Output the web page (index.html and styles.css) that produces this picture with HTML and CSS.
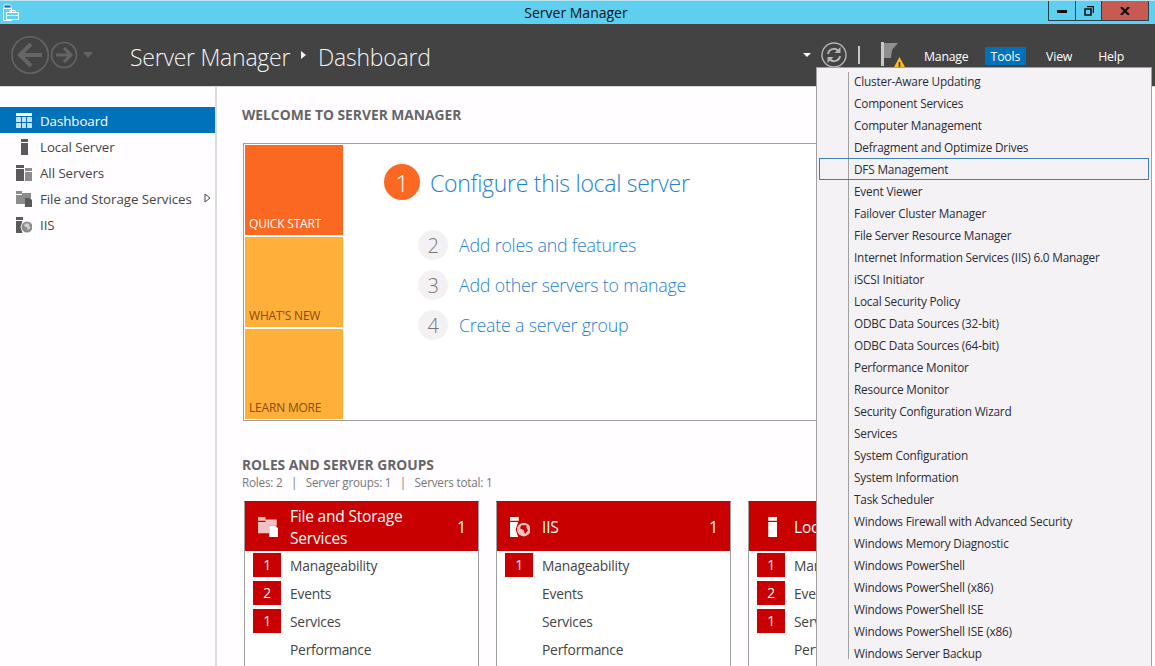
FILE: index.html
```html
<!DOCTYPE html>
<html lang="en">
<head>
  <meta charset="UTF-8">
  <title>Server Manager</title>
  <link rel="stylesheet" href="styles.css">
</head>
<body>
  <svg class="defs" width="0" height="0">
    <symbol id="i-server" viewBox="0 0 16 16">
      <path d="M5 0h7v3H5zM5 4h7v12H5z"/>
    </symbol>
    <symbol id="i-servers" viewBox="0 0 16 16">
      <path d="M0 0h8v3H0zM0 4h8v12H0z"/>
      <path class="dim" d="M9 3h7v3H9zM9 7h7v9H9z"/>
    </symbol>
    <symbol id="i-files" viewBox="0 0 16 16">
      <path class="dim" d="M0 0h6v3H0zM0 4h6V2h9v5H9v6H0z"/>
      <path d="M9 7h5l2 2v7H9z"/>
    </symbol>
    <symbol id="i-iis" viewBox="0 0 16 16">
      <path d="M0 0h7v3H0zM0 4h6.500L4.500 10l2 6H0z"/>
      <circle class="dim" cx="11" cy="10" r="5.500"/>
      <path class="cut" d="M9 6.500h4l.5 3 1 1-2.500 3-1-3-3-1.500z"/>
    </symbol>
  </svg>

  <header class="titlebar">
    <svg class="app-icon" width="18" height="17" viewBox="0 0 18 17">
      <path d="M2.500 4.500h8v12h-8z" fill="#5ed0f0" stroke="#fff"/>
      <path d="M3 1h7v3H3z" fill="#0072bc" stroke="#fff" stroke-width=".8"/>
      <path d="M5.500 8.500h12v7h-12z" fill="#5ed0f0" stroke="#fff"/>
      <path d="M9 8V6.500h5V8M6 11.500h11" fill="none" stroke="#fff"/>
    </svg>
    <span class="window-title">Server Manager</span>
    <div class="window-controls">
      <div class="win-btn min"><span class="min-glyph"></span></div>
      <div class="win-btn">
        <svg width="10" height="10" viewBox="0 0 10 10"><path d="M3 .500h6.500V7M1 3h6v6H1z" fill="none" stroke="#111" stroke-width="1.600"/></svg>
      </div>
      <div class="win-btn close">
        <svg width="10" height="8" viewBox="0 0 10 8"><path d="M1 0l8 8M9 0L1 8" fill="none" stroke="#111" stroke-width="2.200"/></svg>
      </div>
    </div>
  </header>

  <div class="toolbar">
    <svg class="nav-icons" width="84" height="40" viewBox="0 0 84 40">
      <g fill="none" stroke="#656565">
        <circle cx="19" cy="20" r="18.200" stroke-width="1.600"/>
        <circle cx="53" cy="20" r="12.500" stroke-width="1.600"/>
        <path d="M31 20H10M20 9L9 20l11 11" stroke-width="4"/>
        <path d="M45 20h16M53 13l7 7-7 7" stroke-width="3"/>
      </g>
      <path d="M72 17h10l-5 6z" fill="#656565"/>
    </svg>
    <div class="crumbs">
      <span>Server Manager</span>
      <i class="crumb-arrow"></i>
      <span>Dashboard</span>
    </div>
    <div class="tool-right">
      <i class="caret"></i>
      <svg class="refresh" width="26" height="26" viewBox="0 0 26 26">
        <circle cx="13" cy="13" r="12" fill="none" stroke="#b5b5b5" stroke-width="1.400"/>
        <path d="M7 12a6 6 0 0 1 10.500-3M19 14a6 6 0 0 1-10.500 3" fill="none" stroke="#b5b5b5" stroke-width="2"/>
        <path d="M19.500 5v6h-6zM6.500 21v-6h6z" fill="#b5b5b5"/>
      </svg>
      <i class="tool-sep"></i>
      <svg class="flag" width="27" height="27" viewBox="0 0 27 27">
        <path d="M0 0h3v24H0z" fill="#c8c8c8"/>
        <path d="M3 1h14l-6 7-1 8H3z" fill="#8f8f8f"/>
        <path d="M12 27l6.500-12L25 27z" fill="#fdc010"/>
        <path d="M17.700 20h1.600v7h-1.600z" fill="#333"/>
      </svg>
      <nav class="top-menu">
        <span class="manage">Manage</span>
        <span class="active">Tools</span>
        <span>View</span>
        <span>Help</span>
      </nav>
    </div>
  </div>

  <div class="layout">
    <aside class="sidebar">
      <a class="side-item selected">
        <svg width="16" height="16" viewBox="0 0 16 16" class="side-icon"><path fill="#fff" d="M0 0h16v3H0z"/><path fill="#c4e0f4" d="M0 4h5v5H0zM6 4h4v5H6zM11 4h5v5h-5zM0 10h5v5H0zM6 10h4v5H6zM11 10h5v5h-5z"/></svg>
        Dashboard
      </a>
      <a class="side-item"><svg class="side-icon" width="16" height="16"><use href="#i-server"/></svg>Local Server</a>
      <a class="side-item"><svg class="side-icon" width="16" height="16"><use href="#i-servers"/></svg>All Servers</a>
      <a class="side-item"><svg class="side-icon" width="16" height="16"><use href="#i-files"/></svg>File and Storage Services<svg class="expander" width="7" height="10" viewBox="0 0 7 10"><path d="M1 1l5 4-5 4z" fill="#fff" stroke="#444"/></svg></a>
      <a class="side-item"><svg class="side-icon" width="16" height="16"><use href="#i-iis"/></svg>IIS</a>
    </aside>

    <main class="content">
      <h2 class="section-title">WELCOME TO SERVER MANAGER</h2>
      <section class="welcome">
        <div class="tiles">
          <div class="tile quick">QUICK START</div>
          <div class="tile">WHAT'S NEW</div>
          <div class="tile">LEARN MORE</div>
        </div>
        <div class="steps">
          <div class="step-main"><span class="num big">1</span><a>Configure this local server</a></div>
          <div class="step"><span class="num">2</span><a>Add roles and features</a></div>
          <div class="step"><span class="num">3</span><a>Add other servers to manage</a></div>
          <div class="step"><span class="num">4</span><a>Create a server group</a></div>
        </div>
      </section>

      <h2 class="section-title roles-title">ROLES AND SERVER GROUPS</h2>
      <p class="roles-sub">Roles: 2 &nbsp;&nbsp;|&nbsp;&nbsp; Server groups: 1 &nbsp;&nbsp;|&nbsp;&nbsp; Servers total: 1</p>

      <div class="cards">
        <article class="card">
          <div class="card-head">
            <svg class="card-icon" width="20" height="20"><use href="#i-files"/></svg>
            <h3>File and Storage<br>Services</h3>
            <span class="count">1</span>
          </div>
          <div class="row"><b>1</b>Manageability</div>
          <div class="row"><b>2</b>Events</div>
          <div class="row"><b>1</b>Services</div>
          <div class="row"><b class="none"></b>Performance</div>
        </article>
        <article class="card">
          <div class="card-head">
            <svg class="card-icon" width="20" height="20"><use href="#i-iis"/></svg>
            <h3>IIS</h3>
            <span class="count">1</span>
          </div>
          <div class="row"><b>1</b>Manageability</div>
          <div class="row"><b class="none"></b>Events</div>
          <div class="row"><b class="none"></b>Services</div>
          <div class="row"><b class="none"></b>Performance</div>
        </article>
        <article class="card">
          <div class="card-head">
            <svg class="card-icon" width="20" height="20"><use href="#i-server"/></svg>
            <h3>Local Server</h3>
            <span class="count">1</span>
          </div>
          <div class="row"><b>1</b>Manageability</div>
          <div class="row"><b>2</b>Events</div>
          <div class="row"><b>1</b>Services</div>
          <div class="row"><b class="none"></b>Performance</div>
        </article>
      </div>
    </main>
  </div>

  <ul class="tools-menu">
    <li>Cluster-Aware Updating</li>
    <li>Component Services</li>
    <li>Computer Management</li>
    <li>Defragment and Optimize Drives</li>
    <li class="hover">DFS Management</li>
    <li>Event Viewer</li>
    <li>Failover Cluster Manager</li>
    <li>File Server Resource Manager</li>
    <li>Internet Information Services (IIS) 6.0 Manager</li>
    <li>iSCSI Initiator</li>
    <li>Local Security Policy</li>
    <li>ODBC Data Sources (32-bit)</li>
    <li>ODBC Data Sources (64-bit)</li>
    <li>Performance Monitor</li>
    <li>Resource Monitor</li>
    <li>Security Configuration Wizard</li>
    <li>Services</li>
    <li>System Configuration</li>
    <li>System Information</li>
    <li>Task Scheduler</li>
    <li>Windows Firewall with Advanced Security</li>
    <li>Windows Memory Diagnostic</li>
    <li>Windows PowerShell</li>
    <li>Windows PowerShell (x86)</li>
    <li>Windows PowerShell ISE</li>
    <li>Windows PowerShell ISE (x86)</li>
    <li>Windows Server Backup</li>
  </ul>
</body>
</html>
```

FILE: styles.css
```css
* {
  box-sizing: border-box;
}

html,
body {
  height: 100%;
}

body {
  margin: 0;
  overflow: hidden;
  position: relative;
  font-family: "Open Sans", "Noto Sans", sans-serif;
  font-size: 12.500px;
  letter-spacing: -0.2px;
  color: #333;
  background-color: #fffdff;
}

.defs {
  display: none;
}

/* icon symbols pick these up through <use> */
.dim {
  fill: var(--dim, #8c8c8c);
}

.cut {
  fill: var(--cut, #d0d0d0);
}

/* window chrome */
.titlebar {
  height: 24px;
  padding-right: 3px;
  background-color: #5fcfef;
  border-top: 1px solid #b9e6f2;
  position: relative;
  text-align: center;
}

.app-icon {
  position: absolute;
  left: 1px;
  top: 3px;
}

.window-title {
  font-size: 14px;
  line-height: 23px;
  letter-spacing: 0;
  color: #111;
}

.window-controls {
  position: absolute;
  top: 0;
  right: 6px;
  display: flex;
  height: 20px;
  border: 1px solid #28404c;
  border-top: 0;
}

.win-btn {
  width: 26px;
  display: flex;
  align-items: center;
  justify-content: center;
  border-right: 1px solid #28404c;
}

.win-btn.min {
  width: 27px;
}

.win-btn.close {
  width: 46px;
  border-right: 0;
  background-color: #c75a52;
}

.min-glyph {
  display: block;
  width: 10px;
  height: 3px;
  margin-top: 2px;
  background-color: #111;
}

.toolbar {
  height: 63px;
  background-color: #434343;
  border-bottom: 1px solid #d8d8d8;
  display: flex;
  align-items: center;
  padding: 0 25px 0 11px;
  color: #fff;
}

.crumbs {
  display: flex;
  align-items: center;
  margin: 3px 0 0 35px;
  font-size: 23px;
  font-weight: 300;
  letter-spacing: -0.25px;
  color: #f4f4f4;
}

.crumb-arrow {
  width: 0;
  height: 0;
  margin: 0 12px 4px 11px;
  border-left: 5px solid #f4f4f4;
  border-top: 4px solid transparent;
  border-bottom: 4px solid transparent;
}

.tool-right {
  margin-left: auto;
  display: flex;
  align-items: center;
}

.caret {
  width: 0;
  height: 0;
  margin-right: 10px;
  border-top: 4px solid #fff;
  border-left: 4px solid transparent;
  border-right: 4px solid transparent;
}

.tool-sep {
  width: 2px;
  height: 18px;
  margin: 0 21px 0 11px;
  background-color: #c8c8c8;
}

.flag {
  margin-top: 1px;
}

.top-menu {
  display: flex;
  align-items: center;
  gap: 14px;
  margin: 1px 0 0 10px;
}

.top-menu span {
  height: 18px;
  line-height: 19px;
  padding: 0 6px;
  font-size: 12.300px;
  color: #fff;
}

.top-menu .manage {
  padding-right: 2px;
}

.top-menu .active {
  background-color: #0072bc;
}

/* main area */
.layout {
  display: flex;
  height: 579px;
}

.sidebar {
  width: 217px;
  flex: none;
  padding-top: 20px;
  border-right: 2px solid #dcdcdc;
}

.side-item {
  display: flex;
  align-items: center;
  height: 26px;
  padding: 1px 0 0 16px;
  font-size: 13.300px;
  letter-spacing: -0.05px;
  color: #444;
  position: relative;
}

.side-icon {
  margin-right: 8px;
  fill: #5a5a5a;
}

.side-item.selected {
  background-color: #0072bc;
  color: #fff;
}

.expander {
  position: absolute;
  left: 204px;
  top: 8px;
}

.content {
  flex: 1;
  min-width: 0;
  padding: 19px 20px 0 25px;
}

.section-title {
  margin: 0;
  font-size: 13.800px;
  line-height: 18px;
  font-weight: 700;
  letter-spacing: 0;
  color: #666;
}

.welcome {
  display: flex;
  height: 278px;
  margin: 19px 0 0 1px;
  padding: 1px;
  border: 1px solid #a0a0a0;
  background-color: #fff;
}

.tiles {
  width: 98px;
  display: grid;
  grid-template-rows: repeat(3, 90px);
  row-gap: 2px;
}

.tile {
  display: flex;
  align-items: flex-end;
  padding: 0 0 3px 4px;
  font-size: 12px;
  color: #8a4a0a;
  background-color: #ffb03b;
}

.tile.quick {
  color: #fff;
  background-color: #fb6821;
}

.steps {
  padding: 19px 0 0 41px;
  color: #1f7fd0;
}

.step-main,
.step {
  display: flex;
  align-items: center;
}

.step-main {
  font-size: 23px;
  font-weight: 300;
  letter-spacing: -0.28px;
  margin-bottom: 30px;
}

.step-main a {
  margin-left: 10px;
  padding-top: 2px;
}

.step {
  height: 30px;
  margin: 0 0 10px 34px;
  font-size: 17.800px;
  font-weight: 300;
}

.step a {
  margin-left: 11px;
}

.num {
  width: 30px;
  height: 30px;
  border-radius: 50%;
  display: flex;
  align-items: center;
  justify-content: center;
  background-color: #f4f1f4;
  color: #777;
  font-size: 20px;
  font-weight: 300;
}

.num.big {
  width: 36px;
  height: 36px;
  background-color: #fb6821;
  color: #fff;
  font-size: 24px;
}

.roles-title {
  margin-top: 35px;
}

.roles-sub {
  margin: 0;
  line-height: 17px;
  font-size: 11.700px;
  color: #777;
}

.cards {
  display: grid;
  grid-template-columns: repeat(3, 235px);
  column-gap: 17px;
  margin: 10px 0 0 2px;
}

.card {
  height: 190px;
  border: 1px solid #a0a0a0;
  border-top-color: #c80000;
  background-color: #fff;
}

.card-head {
  display: flex;
  align-items: center;
  height: 49px;
  padding: 0 12px 0 13px;
  color: #fff;
  background-color: #c80000;
}

.card-icon {
  flex: none;
  fill: #fff;
  margin-right: 12px;
  --dim: #f2c0c0;
  --cut: #c80000;
}

.card-head h3 {
  margin: 0;
  font-size: 15.500px;
  line-height: 22px;
  font-weight: 400;
}

.count {
  margin-left: auto;
  font-size: 16px;
}

.row {
  display: flex;
  align-items: center;
  height: 28px;
  font-size: 13.800px;
  color: #444;
}

.row b {
  flex: none;
  width: 28px;
  height: 24px;
  margin: 0 9px 0 8px;
  line-height: 24px;
  text-align: center;
  font-weight: 400;
  color: #fff;
  background-color: #c80000;
}

.row b.none {
  background: none;
}

/* tools dropdown, sits over the dashboard */
.tools-menu {
  position: absolute;
  left: 816px;
  top: 67px;
  width: 336px;
  height: 599px;
  margin: 0;
  padding: 2px 2px 0;
  font-size: 11.800px;
  list-style: none;
  background-color: #f5f2f5;
  border: 1px solid #a0a0a0;
  border-bottom: 0;
}

.tools-menu::before {
  content: "";
  position: absolute;
  left: 31px;
  top: 4px;
  bottom: 7px;
  width: 1px;
  background-color: #a0a0a0;
}

.tools-menu li {
  height: 22px;
  line-height: 21px;
  padding-left: 34px;
  color: #2c2c34;
  border: 1px solid transparent;
  position: relative;
}

.tools-menu li.hover {
  border-color: #3c7fb1;
}
```
